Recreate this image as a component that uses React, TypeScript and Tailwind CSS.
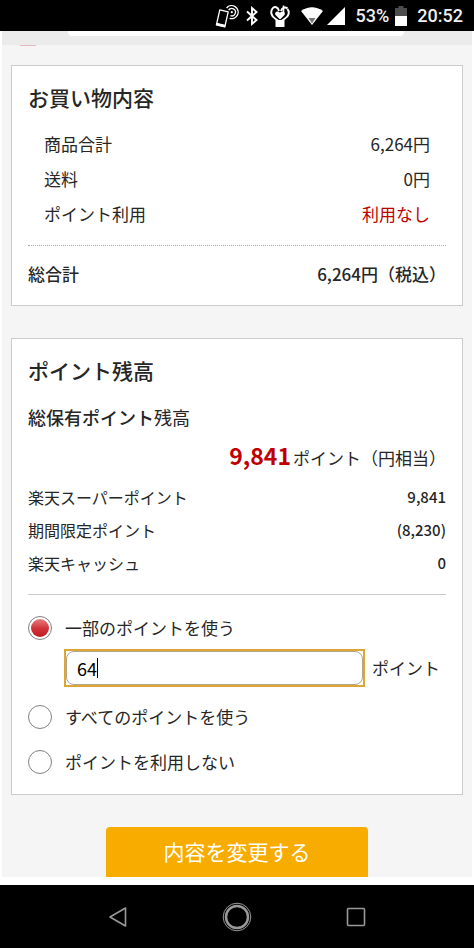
import { useState } from 'react'

type UseMode = 'part' | 'all' | 'none'

const summaryRows = [
  { label: '商品合計', value: '6,264円', color: 'text-[#262626]' },
  { label: '送料', value: '0円', color: 'text-[#262626]' },
  { label: 'ポイント利用', value: '利用なし', color: 'text-[#bf0000]' },
]

const balanceRows = [
  { label: '楽天スーパーポイント', value: '9,841' },
  { label: '期間限定ポイント', value: '(8,230)' },
  { label: '楽天キャッシュ', value: '0' },
]

const radioClass =
  'size-6 shrink-0 appearance-none rounded-full border border-[#808080] bg-white checked:bg-linear-to-b checked:from-[#e8868b] checked:via-[#d2343c] checked:to-[#bd1018] checked:bg-clip-content checked:p-[2px]'

function StatusBar() {
  return (
    <header className="flex h-[31px] shrink-0 items-center justify-end bg-black pr-[11px] font-[Roboto,sans-serif] text-[18px] font-medium text-[#f0f0f0]">
      {/* phone + nfc */}
      <svg className="mr-[7px] h-6 w-6" viewBox="0 0 24 24" fill="none" stroke="#fff">
        <path d="M4.8 5.8 13.2 7.8 9.800 22.800 1.400 20.800Z" strokeWidth="1.3" strokeLinejoin="round" />
        <path d="M1.900 19.300 10.200 21.300 9.800 22.800 1.400 20.800Z" fill="#fff" />
        <circle cx="16.8" cy="8.2" r="1.1" fill="#fff" stroke="none" />
        <path d="M13.600 6.200a3.700 3.700 0 1 1 1.800 5.400M11.600 4a6.500 6.500 0 1 1 3 10.300" strokeWidth="1.3" />
      </svg>
      {/* bluetooth */}
      <svg className="mr-3 h-6 w-3" viewBox="0 0 12 24" fill="none" stroke="#fff" strokeWidth="1.9">
        <path d="M1 7.5 10.5 16 6 20V4l4.5 4L1 16.5" />
      </svg>
      {/* heart in hand */}
      <svg className="mr-[11px] h-6 w-5" viewBox="0 0 20 24">
        <path
          d="M9 7C8 3 4.5 2 2.5 4.5 0 8 1.5 12.5 5 14.5L10 18l5-3.5c3.5-2 5-6 2.500-9.500M17.500 4.500C15.500 2.500 12 3.500 11 7"
          fill="none"
          stroke="#fff"
          strokeWidth="2"
        />
        <path d="M13.5 1.5v8" stroke="#fff" strokeWidth="1.6" />
        <path d="M10 15.5 5.5 11C4 8.5 7.5 6 10 8.7 12.5 6 16 8.5 14.5 11Z" fill="#fff" />
        <path d="M5.500 16h9v7h-9z" fill="#fff" />
      </svg>
      {/* wifi */}
      <svg className="mr-1 h-[18px] w-[22px]" viewBox="0 0 22 18">
        <path d="M0 4Q11-3.5 22 4L11 18Z" fill="#fff" />
        <path d="M7.5 11h7L11 16.5Z" fill="#777" />
      </svg>
      {/* signal */}
      <svg className="mr-[11px] h-[18px] w-[18px]" viewBox="0 0 18 18">
        <path d="M18 0v18H0Z" fill="#fff" />
      </svg>
      <span>53%</span>
      {/* battery */}
      <svg className="mr-2.5 ml-1.5 h-5 w-3" viewBox="0 0 12 20">
        <path d="M3.5 0h5v2H12v8H0V2h3.5Z" fill="#4d4d4d" />
        <path d="M0 10h12v10H0Z" fill="#fff" />
      </svg>
      <span>20:52</span>
    </header>
  )
}

function NavBar() {
  return (
    <nav className="flex h-[63px] shrink-0 items-center justify-around bg-black px-[61px]">
      <button aria-label="戻る">
        <svg width="20" height="22" viewBox="0 0 20 22">
          <path d="M17.5 2v18L2 11Z" fill="none" stroke="#999" strokeWidth="1.6" strokeLinejoin="round" />
        </svg>
      </button>
      <button aria-label="ホーム">
        <svg width="30" height="30" viewBox="0 0 30 30" fill="none" stroke="#999">
          <circle cx="15" cy="15" r="13.8" strokeWidth="1" />
          <circle cx="15" cy="15" r="11" strokeWidth="2.5" />
        </svg>
      </button>
      <button aria-label="アプリ履歴">
        <svg width="20" height="20" viewBox="0 0 20 20">
          <rect x="1.5" y="1.5" width="17" height="17" rx="1" fill="none" stroke="#999" strokeWidth="1.6" />
        </svg>
      </button>
    </nav>
  )
}

export default function App() {
  const [mode, setMode] = useState<UseMode>('part')
  const [points, setPoints] = useState('64')

  return (
    <div className="flex h-screen flex-col bg-white font-['Noto_Sans_CJK_JP',sans-serif] text-[17px] leading-6 text-[#262626]">
      <StatusBar />

      <main className="mx-0.5 mb-2 flex-1 overflow-hidden bg-[#f5f5f5]">
        {/* bottom edge of the previous block */}
        <div className="h-[14px] bg-[#ebebeb]">
          <div className="mr-[68px] ml-[66px] h-[5px] rounded-b-sm bg-white" />
        </div>
        <div className="ml-[18px] h-px w-4 bg-[#e6b8be]" />

        <div className="px-[9px]">
          <section className="mt-[19px] border border-[#ccc] bg-white px-4 pt-[15px] pb-[19px]">
            <h2 className="text-[21px] leading-8 font-medium">お買い物内容</h2>
            <dl className="mt-[13px] px-4">
              {summaryRows.map(row => (
                <div key={row.label} className="flex h-[35px] items-center justify-between">
                  <dt>{row.label}</dt>
                  <dd className={row.color}>{row.value}</dd>
                </div>
              ))}
            </dl>
            <div className="mt-[14px] flex justify-between border-t border-dotted border-[#aaa] pt-4 font-medium">
              <span>総合計</span>
              <span>6,264円（税込）</span>
            </div>
          </section>

          <section className="mt-8 border border-[#ccc] bg-white px-4 pt-[15px] pb-5">
            <h2 className="text-[21px] leading-8 font-medium">ポイント残高</h2>
            <p className="mt-[19px] text-[18px] leading-6">
              <span className="font-medium">総保有ポイント</span>残高
            </p>
            <p className="mt-[10px] text-right leading-8">
              <strong className="mr-0.5 text-[23px] font-bold text-[#bf0000]">9,841</strong>ポイント（円相当）
            </p>
            <dl className="mt-[6px] border-b border-[#ccc] pb-[15px] text-[16px]">
              {balanceRows.map(row => (
                <div key={row.label} className="flex h-[33px] items-center justify-between">
                  <dt>{row.label}</dt>
                  <dd className="text-[15px] font-medium">{row.value}</dd>
                </div>
              ))}
            </dl>

            <div className="mt-[21px]">
              <label className="flex items-center gap-[13px]">
                <input type="radio" name="use" className={radioClass} checked={mode === 'part'} onChange={() => setMode('part')} />
                一部のポイントを使う
              </label>
              <div className="mt-[9px] flex items-center pr-1.5 pl-9">
                <div className="relative h-[38px] min-w-0 flex-1 border-2 border-[#dca637]">
                  <input
                    id="points"
                    type="text"
                    inputMode="numeric"
                    className="size-full rounded-lg border border-[#b5a58b] bg-white pl-[10px] text-[18px] text-black outline-none"
                    value={points}
                    onChange={e => setPoints(e.target.value)}
                  />
                  {/* text cursor */}
                  <span className="absolute top-[7px] left-[31px] h-5 w-px bg-black" />
                </div>
                <label htmlFor="points" className="ml-[7px]">ポイント</label>
              </div>
              <label className="mt-[18px] flex items-center gap-[13px]">
                <input type="radio" name="use" className={radioClass} checked={mode === 'all'} onChange={() => setMode('all')} />
                すべてのポイントを使う
              </label>
              <label className="mt-[21px] flex items-center gap-[13px]">
                <input type="radio" name="use" className={radioClass} checked={mode === 'none'} onChange={() => setMode('none')} />
                ポイントを利用しない
              </label>
            </div>
          </section>

          <button className="mx-auto mt-8 block h-14 w-[58%] rounded bg-[#f9ac00] pb-2 text-[21px] text-white">
            内容を変更する
          </button>
        </div>
      </main>

      <NavBar />
    </div>
  )
}
